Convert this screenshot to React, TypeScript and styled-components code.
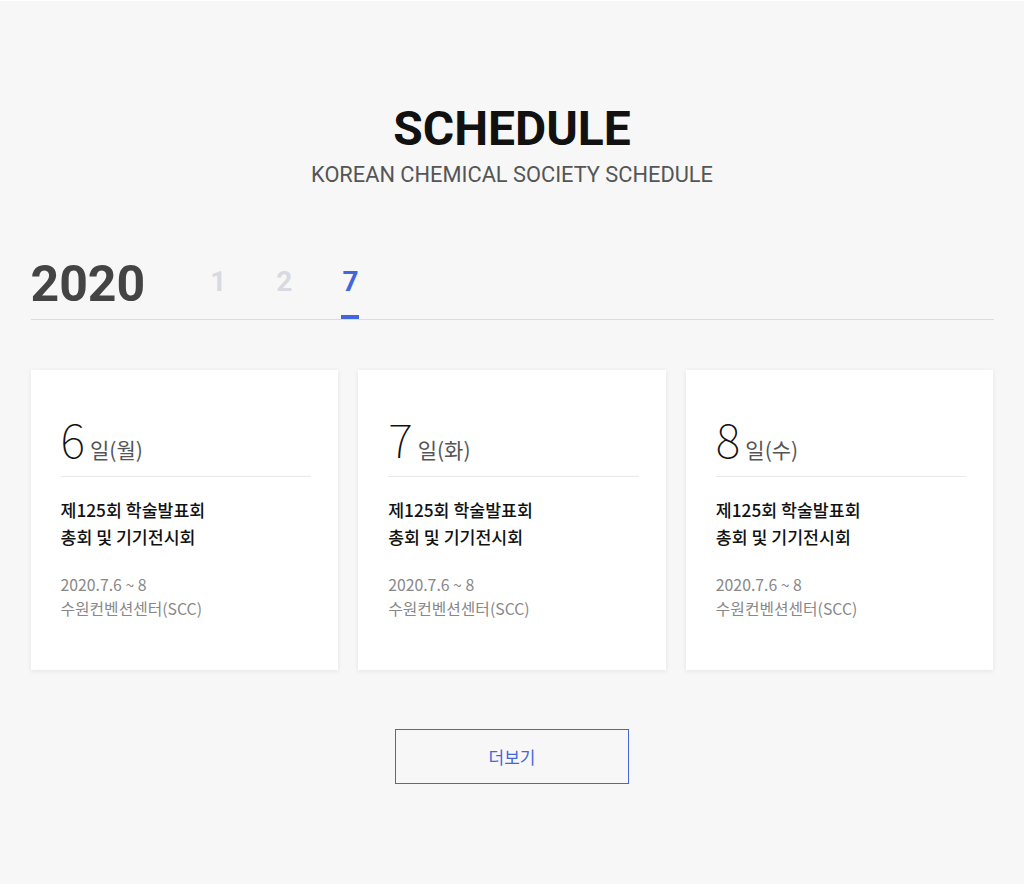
import React, { useState } from "react";
import styled, { createGlobalStyle } from "styled-components";

const GlobalStyle = createGlobalStyle`
  * { box-sizing: border-box; }
  html, body { margin: 0; padding: 0; background: #ffffff; }
  body { font-family: "Noto Sans CJK KR", "Noto Sans", sans-serif; }
`;

const Section = styled.section`
  margin-top: 1px;
  background: #f7f7f7;
  padding: 99px 0 100px;
`;

const Heading = styled.div`
  text-align: center;
`;

const Title = styled.h2`
  margin: 0;
  font-family: Roboto, "Liberation Sans", sans-serif;
  font-weight: 700;
  font-size: 48px;
  line-height: normal;
  color: #111;
`;

const Subtitle = styled.p`
  margin: 5px 0 0;
  font-family: Roboto, "Liberation Sans", sans-serif;
  font-weight: 400;
  font-size: 21.8px;
  line-height: normal;
  color: #555;
`;

const Container = styled.div`
  width: 963px;
  margin: 0 auto;
`;

const YearRow = styled.div`
  display: flex;
  align-items: flex-end;
  margin-top: 72px;
  border-bottom: 1px solid #dcdcdc;
`;

const Year = styled.div`
  font-family: Roboto, "Liberation Sans", sans-serif;
  font-weight: 700;
  font-size: 50px;
  line-height: 1;
  color: #444;
  padding-bottom: 10px;
`;

const Tabs = styled.div`
  display: flex;
  gap: 50px;
  margin-left: 65px;
`;

const Tab = styled.button<{ $active?: boolean }>`
  position: relative;
  border: 0;
  background: none;
  padding: 0 0 23px;
  margin: 0;
  cursor: pointer;
  font-family: Roboto, "Liberation Sans", sans-serif;
  font-weight: 700;
  font-size: 28px;
  line-height: 1;
  color: ${(p) => (p.$active ? "#4466dd" : "#d9d9e1")};
  &::after {
    content: "";
    position: absolute;
    left: -1px;
    right: -1px;
    bottom: 0;
    height: 4px;
    background: ${(p) => (p.$active ? "#4466dd" : "transparent")};
  }
`;

const Cards = styled.div`
  display: grid;
  grid-template-columns: repeat(3, 1fr);
  gap: 20px;
  margin-top: 50px;
`;

const Card = styled.article`
  background: #fff;
  height: 300px;
  padding: 44px 27px 0 30px;
  box-shadow: 0 1px 5px rgba(0, 0, 0, 0.08);
`;

const DayRow = styled.div`
  display: flex;
  align-items: baseline;
  padding-bottom: 12px;
  border-bottom: 1px solid #e8e8e8;
`;

const DayNum = styled.span`
  font-family: "Noto Sans CJK KR", Roboto, sans-serif;
  font-weight: 100;
  font-size: 47px;
  line-height: 1;
  color: #111;
`;

const DayLabel = styled.span`
  margin-left: 5px;
  font-family: "Noto Sans CJK KR", sans-serif;
  font-size: 21px;
  color: #555;
`;

const EventTitle = styled.p`
  margin: 19px 0 0;
  font-family: "Noto Sans CJK KR", sans-serif;
  font-weight: 500;
  font-size: 17.3px;
  line-height: 27px;
  color: #111;
`;

const Meta = styled.p`
  margin: 23px 0 0;
  font-family: "Noto Sans CJK KR", sans-serif;
  font-weight: 400;
  font-size: 15.8px;
  line-height: 24px;
  color: #888;
`;

const MoreWrap = styled.div`
  display: flex;
  justify-content: center;
  margin-top: 59px;
`;

const MoreButton = styled.button`
  width: 234px;
  height: 55px;
  border: 1px solid #4466dd;
  background: transparent;
  color: #4466dd;
  font-family: "Noto Sans CJK KR", sans-serif;
  font-size: 17px;
  cursor: pointer;
`;

const days = [
  { n: "6", w: "월" },
  { n: "7", w: "화" },
  { n: "8", w: "수" },
];

export default function App() {
  const [month, setMonth] = useState("7");
  return (
    <>
      <GlobalStyle />
      <Section>
        <Heading>
          <Title>SCHEDULE</Title>
          <Subtitle>KOREAN CHEMICAL SOCIETY SCHEDULE</Subtitle>
        </Heading>
        <Container>
          <YearRow>
            <Year>2020</Year>
            <Tabs>
              {["1", "2", "7"].map((m) => (
                <Tab key={m} $active={m === month} onClick={() => setMonth(m)}>
                  {m}
                </Tab>
              ))}
            </Tabs>
          </YearRow>
          <Cards>
            {days.map((d) => (
              <Card key={d.n}>
                <DayRow>
                  <DayNum>{d.n}</DayNum>
                  <DayLabel>일({d.w})</DayLabel>
                </DayRow>
                <EventTitle>
                  제125회 학술발표회
                  <br />
                  총회 및 기기전시회
                </EventTitle>
                <Meta>
                  2020.7.6 ~ 8
                  <br />
                  수원컨벤션센터(SCC)
                </Meta>
              </Card>
            ))}
          </Cards>
          <MoreWrap>
            <MoreButton>더보기</MoreButton>
          </MoreWrap>
        </Container>
      </Section>
    </>
  );
}
